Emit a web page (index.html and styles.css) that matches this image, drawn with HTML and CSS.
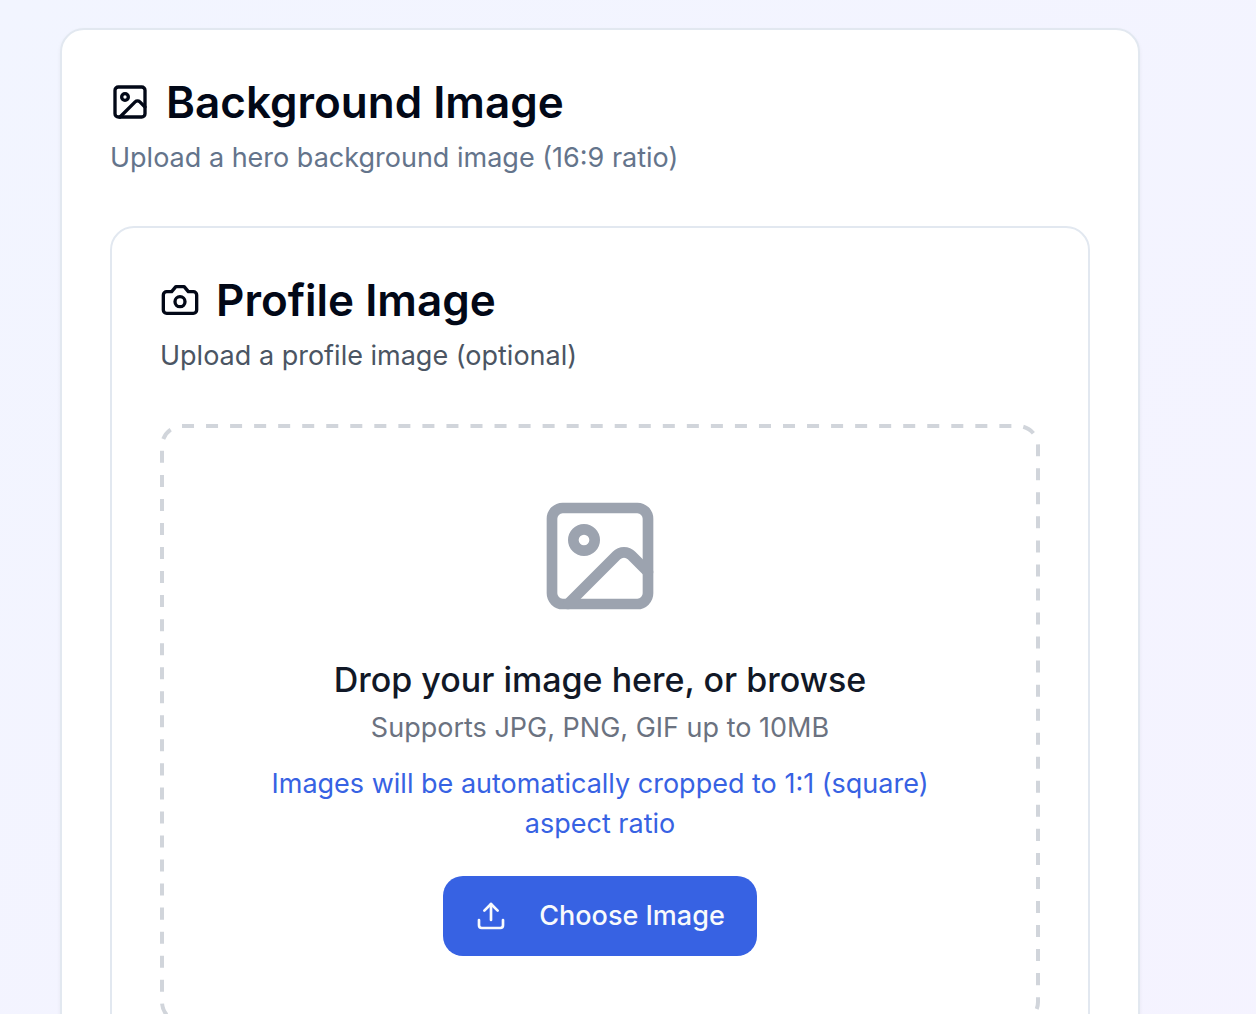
FILE: index.html
```html
<!DOCTYPE html>
<html lang="en">
<head>
<meta charset="utf-8">
<meta name="viewport" content="width=device-width, initial-scale=1">
<title>Background Image</title>
<link rel="stylesheet" href="styles.css">
</head>
<body>
<main class="page">
  <section class="card card-raised">
    <header class="card-header">
      <h2 class="card-title">
        <svg class="icon" viewBox="0 0 24 24" aria-hidden="true"><rect x="3" y="3" width="18" height="18" rx="2"/><circle cx="9" cy="9" r="2"/><path d="m21 15-3.086-3.086a2 2 0 0 0-2.828 0L6 21"/></svg>
        Background Image
      </h2>
      <p class="card-description">Upload a hero background image (16:9 ratio)</p>
    </header>
    <section class="card">
      <header class="card-header">
        <h3 class="card-title">
          <svg class="icon" viewBox="0 0 24 24" aria-hidden="true"><path d="M14.5 4h-5L7 7H4a2 2 0 0 0-2 2v9a2 2 0 0 0 2 2h16a2 2 0 0 0 2-2V9a2 2 0 0 0-2-2h-3l-2.5-3z"/><circle cx="12" cy="13" r="3"/></svg>
          Profile Image
        </h3>
        <p class="card-description card-description-dark">Upload a profile image (optional)</p>
      </header>
      <div class="dropzone">
        <svg class="dropzone-outline" aria-hidden="true"><rect class="dropzone-dashes" x="2" y="2" rx="20" pathLength="2904"/></svg>
        <svg class="icon dropzone-icon" viewBox="0 0 24 24" aria-hidden="true"><rect x="3" y="3" width="18" height="18" rx="2"/><circle cx="9" cy="9" r="2"/><path d="m21 15-3.086-3.086a2 2 0 0 0-2.828 0L6 21"/></svg>
        <p class="dropzone-title">Drop your image here, or browse</p>
        <p class="dropzone-formats">Supports JPG, PNG, GIF up to 10MB</p>
        <p class="dropzone-note">Images will be automatically cropped to 1:1 (square) aspect ratio</p>
        <button class="button" type="button">
          <svg class="icon button-icon" viewBox="0 0 24 24" aria-hidden="true"><path d="M21 15v4a2 2 0 0 1-2 2H5a2 2 0 0 1-2-2v-4"/><path d="m17 8-5-5-5 5"/><path d="M12 3v12"/></svg>
          Choose Image
        </button>
      </div>
    </section>
  </section>
</main>
</body>
</html>
```
FILE: styles.css
```css
* {
  box-sizing: border-box;
}

body,
h2,
h3,
p {
  margin: 0;
}

body {
  font-family: Inter, "Liberation Sans", sans-serif;
  font-size: 27px;
  line-height: 40px;
  color: #020817;
}

.page {
  height: 100vh;
  overflow-y: auto;
  scrollbar-width: none;
  padding: 28px 116px 28px 60px;
  background: linear-gradient(to bottom right, #f2f5ff, #f5f3ff 110%);
}

.card {
  padding: 48px;
  border: 2px solid #e2e8f0;
  border-radius: 24px;
  background: #fff;
}

.card-raised {
  box-shadow: 0 2px 4px rgba(0, 0, 0, 0.05);
}

.card-header {
  display: flex;
  flex-direction: column;
  gap: 12px;
  padding-bottom: 48px;
}

.card-title {
  display: flex;
  align-items: center;
  gap: 16px;
  font-size: 44px;
  line-height: 48px;
  font-weight: 600;
}

.card-description {
  color: #64748b;
}

.card-description-dark {
  color: #4b5563;
}

.icon {
  flex: none;
  width: 40px;
  height: 40px;
  fill: none;
  stroke: currentColor;
  stroke-width: 2;
  stroke-linecap: round;
  stroke-linejoin: round;
}

.dropzone {
  position: relative;
  display: flex;
  flex-direction: column;
  align-items: center;
  padding: 68px;
  text-align: center;
}

.dropzone-outline {
  position: absolute;
  inset: 0;
  width: 100%;
  height: 100%;
  pointer-events: none;
}

.dropzone-dashes {
  width: calc(100% - 4px);
  height: calc(100% - 4px);
  fill: none;
  stroke: #d1d5db;
  stroke-width: 4;
  stroke-dasharray: 12;
}

.dropzone-icon {
  width: 128px;
  height: 128px;
  margin-bottom: 32px;
  color: #9ca3af;
}

.dropzone-title {
  font-size: 34px;
  line-height: 56px;
  font-weight: 500;
  color: #111827;
}

.dropzone-formats {
  margin-bottom: 16px;
  color: #6b7280;
}

.dropzone-note {
  margin-bottom: 32px;
  color: #3762e3;
}

.button {
  display: flex;
  align-items: center;
  gap: 32px;
  padding: 20px 32px;
  border: 0;
  border-radius: 20px;
  background: #3762e3;
  color: #f8fafc;
  font: inherit;
  font-weight: 500;
  cursor: pointer;
}

.button-icon {
  width: 32px;
  height: 32px;
}
```
